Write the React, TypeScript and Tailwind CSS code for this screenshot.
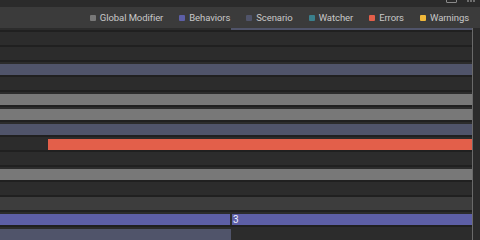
import React from "react";

const legend = [
  { label: "Global Modifier", color: "bg-[#787878]" },
  { label: "Behaviors", color: "bg-[#5d5fa6]" },
  { label: "Scenario", color: "bg-[#50546a]" },
  { label: "Watcher", color: "bg-[#3a7f8c]" },
  { label: "Errors", color: "bg-[#e35f4a]" },
  { label: "Warnings", color: "bg-[#f0b83a]" },
];

function Row({ children, hl }: { children?: React.ReactNode; hl?: boolean }) {
  return (
    <div className={`flex flex-col h-[15px] ${hl ? "bg-[#3d3d3d]" : ""}`}>
      <div className="h-[2px]" />
      <div className="h-[11px] flex">{children}</div>
      <div className="h-[2px] bg-[#202020]" />
    </div>
  );
}

export default function App() {
  return (
    <div
      className="w-[480px] h-[240px] overflow-hidden bg-[#2c2c2c] flex flex-col"
      style={{ fontFamily: "Roboto, 'Noto Sans', sans-serif" }}
    >
      <div className="h-[7px] bg-[#2b2b2b] flex justify-end items-start pr-[5px] gap-[10px]">
        <div className="w-[11px] h-[9px] -mt-[6px] border border-[#8a8a8a] rounded-[1px]" />
        <div className="w-[8px] h-[3px] flex gap-[1px]">
          <div className="w-[2px] h-[2px] bg-[#6e6e6e]" />
          <div className="w-[2px] h-[2px] bg-[#6e6e6e]" />
          <div className="w-[2px] h-[2px] bg-[#6e6e6e]" />
        </div>
      </div>
      <div className="h-[21px] bg-[#3b3b3b] flex items-center justify-end pr-[11px] gap-[16px]">
        {legend.map((l) => (
          <div key={l.label} className="flex items-center gap-[4px]">
            <div className={`w-[6px] h-[6px] rounded-[1px] ${l.color}`} />
            <span className="text-[9.5px] leading-none text-[#c8c8c8] tracking-[-0.08px]">{l.label}</span>
          </div>
        ))}
      </div>
      <div className="flex flex-1">
        <div className="w-[472px] flex flex-col">
          <div className="h-[2px] flex">
            <div className="w-[231px]" />
            <div className="flex-1 bg-[#50546a]" />
          </div>
          <div className="h-[2px] bg-[#202020]" />
          <Row />
          <Row />
          <Row>
            <div className="flex-1 bg-[#50546a]" />
          </Row>
          <Row />
          <Row>
            <div className="flex-1 bg-[#787878]" />
          </Row>
          <Row>
            <div className="flex-1 bg-[#787878]" />
          </Row>
          <Row>
            <div className="flex-1 bg-[#50546a]" />
          </Row>
          <Row>
            <div className="w-[48px]" />
            <div className="flex-1 bg-[#e35f4a]" />
          </Row>
          <Row />
          <Row>
            <div className="flex-1 bg-[#787878]" />
          </Row>
          <Row />
          <Row hl />
          <Row>
            <div className="w-[230px] bg-[#5d5fa6]" />
            <div className="w-[2px] bg-[#2c2c2c]" />
            <div className="flex-1 bg-[#5d5fa6] flex items-center pl-[1px]">
              <span className="text-[10px] leading-none text-[#f0f0ff]">3</span>
            </div>
          </Row>
          <div className="flex flex-col">
            <div className="h-[2px]" />
            <div className="h-[11px] flex">
              <div className="w-[231px] bg-[#50546a]" />
            </div>
          </div>
        </div>
        <div className="w-[1px] bg-[#6a6a6a]" />
        <div className="flex-1 bg-[#2b2b2b]" />
      </div>
    </div>
  );
}
